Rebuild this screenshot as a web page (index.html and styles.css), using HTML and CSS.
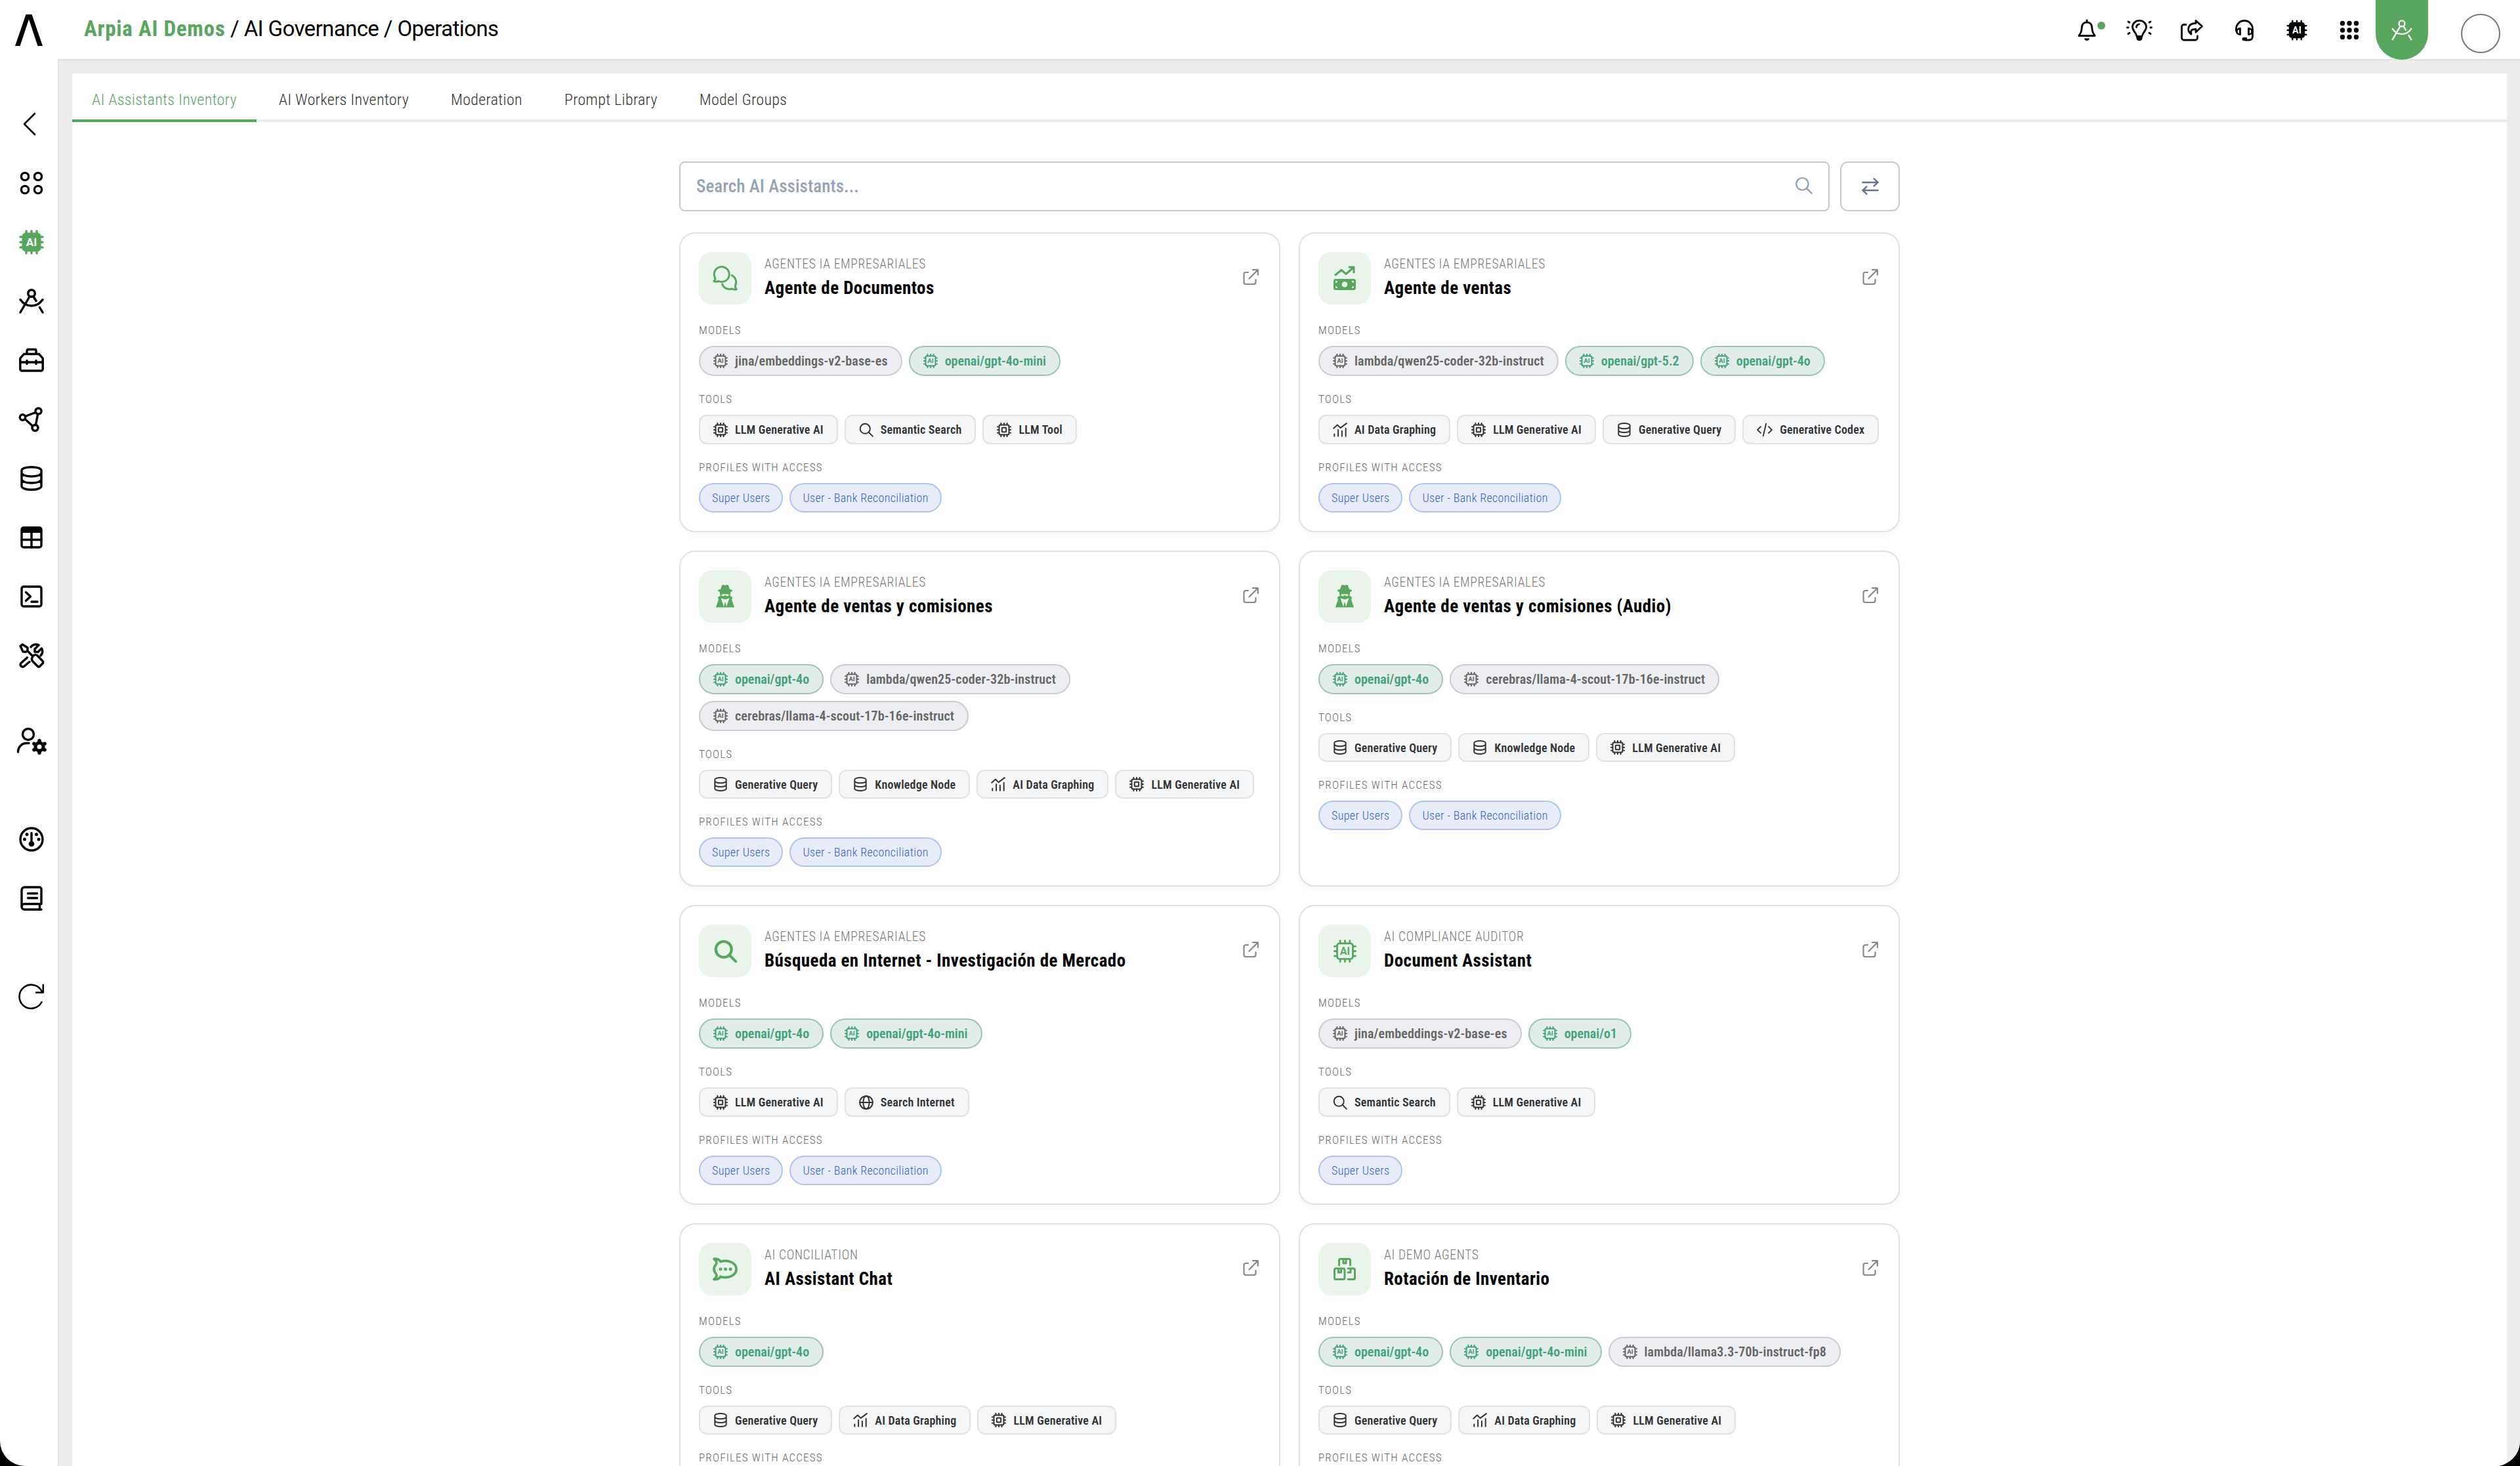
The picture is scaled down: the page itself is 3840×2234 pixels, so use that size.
FILE: index.html
```
<!DOCTYPE html>
<html lang="en">

<head>
  <meta charset="UTF-8">
  <meta name="viewport" content="width=device-width, initial-scale=1.0">
  <title>AI Governance / Operations</title>
  <link rel="stylesheet" href="styles.css">
</head>

<body>
  <!-- icons -->
  <svg class="sprite" aria-hidden="true">
    <symbol id="i-ai" viewBox="0 0 38 38">
      <rect x="6" y="6" width="26" height="26" rx="4" class="ln" />
      <path class="ln" d="M11 6V1.500M19 6V1.500M27 6V1.500M11 36.500V32M19 36.500V32M27 36.500V32M6 11H1.500M6 19H1.500M6 27H1.500M36.500 11H32M36.500 19H32M36.500 27H32" />
      <text x="19" y="25" class="ai">AI</text>
    </symbol>
    <symbol id="i-ai-solid" viewBox="0 0 38 38">
      <rect x="4.500" y="4.500" width="29" height="29" rx="6" fill="currentColor" />
      <path class="ln" d="M11 6V2M19 6V2M27 6V2M11 36V32M19 36V32M27 36V32M6 11H2M6 19H2M6 27H2M36 11H32M36 19H32M36 27H32" />
      <text x="19" y="25" class="ai ai-white">AI</text>
    </symbol>
    <symbol id="i-cpu" viewBox="0 0 38 38">
      <rect x="6" y="6" width="26" height="26" rx="4" class="ln" />
      <rect x="13.500" y="13.500" width="11" height="11" rx="1" class="ln" />
      <path class="ln" d="M11 6V1.500M19 6V1.500M27 6V1.500M11 36.500V32M19 36.500V32M27 36.500V32M6 11H1.500M6 19H1.500M6 27H1.500M36.500 11H32M36.500 19H32M36.500 27H32" />
    </symbol>
    <symbol id="i-compass" viewBox="0 0 38 38">
      <circle cx="19" cy="7" r="5.300" class="ln" />
      <path class="ln" d="M16 12L2 36M22 12l4 6.500M31.500 28.500L36 36M2 16.500c4 6 10 9.500 17 9.500s13-3.500 17-9.500" />
    </symbol>
    <symbol id="i-db" viewBox="0 0 38 38">
      <path class="ln" d="M4 7c0-3 7-5.300 15-5.300S34 4 34 7v24c0 3-7 5.300-15 5.300S4 34 4 31zM4 10c0 4 7 6 15 6s15-2 15-6M4 20c0 4 7 6 15 6s15-2 15-6" />
    </symbol>
    <symbol id="i-search" viewBox="0 0 38 38">
      <circle cx="16" cy="16" r="13" class="ln" />
      <path class="ln" d="M25.500 25.500L36 36" />
    </symbol>
    <symbol id="i-graph" viewBox="0 0 38 38">
      <path class="ln" d="M2 15L12 6l8 8L36 2M4 36v-6M14 36V19M24 36V22M34 36V15" />
    </symbol>
    <symbol id="i-code" viewBox="0 0 44 38">
      <path class="ln" d="M11 10L2 19l9 9M33 10l9 9-9 9M26 2L18 36" />
    </symbol>
    <symbol id="i-globe" viewBox="0 0 38 38">
      <circle cx="19" cy="19" r="17" class="ln" />
      <ellipse cx="19" cy="19" rx="8" ry="17" class="ln" />
      <path class="ln" d="M2 19h34" />
    </symbol>
    <symbol id="i-ext" viewBox="0 0 24 24">
      <path class="ln" d="M8 5H4.500A3 3 0 0 0 1.500 8v12a3 3 0 0 0 3 3h12a3 3 0 0 0 3-3v-4M15 1.200h7.800V9M22.500 1.500L9.500 14.500" />
    </symbol>
  </svg>

  <div class="app">
    <!-- left menu -->
    <aside class="sidebar">
      <a class="logo" href="#">
        <svg viewBox="0 0 42 48"><path d="M16.500 0h9L42 48h-7.500L21 7.500 7.500 48H0z" fill="#000" /></svg>
      </a>
      <nav class="menu">
        <a href="#"><svg viewBox="0 0 38 38"><path class="ln thin" d="M24 3L8 19l16 16" /></svg></a>
        <a href="#"><svg viewBox="0 0 38 38"><g class="ln"><circle cx="9" cy="9" r="5.600" /><circle cx="29" cy="9" r="5.600" /><circle cx="9" cy="29" r="5.600" /><circle cx="29" cy="29" r="5.600" /></g></svg></a>
        <a class="on" href="#"><svg><use href="#i-ai-solid" /></svg></a>
        <a href="#"><svg><use href="#i-compass" /></svg></a>
        <a href="#"><svg viewBox="0 0 38 38"><path class="ln" d="M7.500 9.500h23L36.200 16v16.500a2.500 2.500 0 0 1-2.500 2.500H4.300a2.500 2.500 0 0 1-2.500-2.500V16zM12 9V4.500a2 2 0 0 1 2-2h10a2 2 0 0 1 2 2V9M2 22h34M12 19.500v5M26 19.500v5" /></svg></a>
        <a href="#"><svg viewBox="0 0 38 38"><g class="ln"><circle cx="5.500" cy="16" r="4.200" /><circle cx="29.500" cy="6.500" r="4.500" /><circle cx="24.500" cy="32" r="4.500" /><path d="M9.500 14.500l15.500-6M9 18.500L20.500 29M28.500 11.500l-3 16" /></g></svg></a>
        <a href="#"><svg><use href="#i-db" /></svg></a>
        <a href="#"><svg viewBox="0 0 38 38"><rect x="4" y="4" width="30" height="30" rx="3" class="ln" /><path d="M4 4h30v8H4z" fill="currentColor" /><path class="ln" d="M19 11v23M4 22.500h30" /></svg></a>
        <a href="#"><svg viewBox="0 0 38 38"><rect x="4" y="4" width="30" height="30" rx="3" class="ln" /><path class="ln" d="M10.500 12.500l7 6.500-7 6.500M19 27h9" /></svg></a>
        <a href="#"><svg viewBox="0 0 38 38"><path class="ln" d="M2 4.500L5 2l8 5v4.500l-2.500 2L6 13zM13 12l8 8M21.500 19.500c2-2 5-2 7 0L36.500 28v2.500L31 36h-2l-8-8c-2-2-2-5 .5-8.500zM12.500 22l-10 9c-1.500 3 1.500 6 4.500 5l9-7.500M18 6c3-4 8-5 12-3l-6 6v4.500h5l5.500-5.500c2 4 1.500 8-1.500 11" /></svg></a>
        <a class="gap-40" href="#"><svg class="wide" viewBox="0 0 46 42"><circle cx="18" cy="11" r="8.500" class="ln" /><path class="ln" d="M2.500 38c0-8 6-13.500 13-13.500h3.500" /><circle cx="35" cy="30" r="6" fill="none" stroke="currentColor" stroke-width="5" /><path d="M35 20.800v1M35 38.200v1M27 25.400l1 .6M42 34l1 .6M27 34.600l1-.6M42 26l1-.6" stroke="currentColor" stroke-width="5.500" stroke-linecap="round" /></svg></a>
        <a class="gap-60" href="#"><svg viewBox="0 0 38 38"><circle cx="19" cy="19" r="17" class="ln" /><path class="ln" d="M19 9.500V24" /><g fill="currentColor"><circle cx="19" cy="26" r="4.300" /><circle cx="12" cy="11.500" r="2.500" /><circle cx="26.500" cy="11.500" r="2.500" /><circle cx="8.500" cy="19" r="2.500" /><circle cx="30" cy="19" r="2.500" /></g></svg></a>
        <a href="#"><svg viewBox="0 0 38 38"><path class="ln" d="M34 36H8.500A4.500 4.500 0 0 1 4 31.500V6.500A4.500 4.500 0 0 1 8.500 2H31a3 3 0 0 1 3 3v22.500H8a4 4 0 0 0-4 4M31.500 28v8M13.500 11.500h14M13.500 18.500h14" /></svg></a>
        <a class="gap-60" href="#"><svg viewBox="0 0 38 38"><path class="ln thin" d="M34.500 27A18 18 0 1 1 35 11.500M36.800.8v11.700H26" /></svg></a>
      </nav>
    </aside>

    <div class="page">
      <header class="header">
        <div class="crumbs"><b>Arpia AI Demos</b> <span>/ AI Governance / Operations</span></div>
        <div class="actions">
          <a class="bell" href="#"><svg viewBox="0 0 32 32"><path class="ln" d="M16 1v3M16 3.800c-5 0-7.800 3.700-7.800 8.200 0 7-2 9-4.400 12.500h24.400C25.800 21 23.800 19 23.800 12c0-4.500-2.800-8.200-7.800-8.200z" /><path d="M12 28.500h8c-.8 4.500-7.200 4.500-8 0z" fill="currentColor" /></svg></a>
          <a href="#"><svg class="bulb" viewBox="0 0 40 32"><path class="ln" d="M15.500 24c0-4-6-6.500-6-13a10.500 9.700 0 0 1 21 0c0 6.500-6 9-6 13M15.500 11.500c0-2.500 1.500-4 4-4.500M1.500 12h1.500M37 12h1.500M3 3l2 1.200M37 3l-2 1.200M3 21.500l2-1.200M37 21.500l-2-1.200" /><path d="M14.500 24h11l-1.500 6c-1.500 3-6.500 3-8 0z" fill="currentColor" /></svg></a>
          <a href="#"><svg class="share" viewBox="0 0 34 32"><path class="ln" d="M8 7.500H5A3.500 3.500 0 0 0 1.500 11v16.500A3.500 3.500 0 0 0 5 31h17a3.500 3.500 0 0 0 3.500-3.500V25M23 1.500l9.500 8.500L23 19v-4.500c-6 0-8.500 1.500-7 7.500-7-5-6-16.500 7-16.500z" /></svg></a>
          <a href="#"><svg viewBox="0 0 32 32"><path class="ln" d="M3.500 17v-3a12.500 12.500 0 0 1 25 0v12a5 5 0 0 1-5 5H17M9.500 13.500c-7 0-7 9 0 9zM22.500 13.500c7 0 7 9 0 9z" /><path d="M15 27h5v5h-5a2.500 2.500 0 0 1 0-5z" fill="currentColor" /></svg></a>
          <a href="#"><svg><use href="#i-ai-solid" /></svg></a>
          <a href="#"><svg viewBox="0 0 32 32"><g fill="currentColor"><circle cx="5.500" cy="5.500" r="3.700" /><circle cx="16" cy="5.500" r="3.700" /><circle cx="26.500" cy="5.500" r="3.700" /><circle cx="5.500" cy="16" r="3.700" /><circle cx="16" cy="16" r="3.700" /><circle cx="26.500" cy="16" r="3.700" /><circle cx="5.500" cy="26.500" r="3.700" /><circle cx="16" cy="26.500" r="3.700" /><circle cx="26.500" cy="26.500" r="3.700" /></g></svg></a>
          <a class="current" href="#"><svg><use href="#i-compass" /></svg></a>
        </div>
        <div class="avatar"></div>
      </header>

      <main class="main">
        <div class="panel">
          <div class="tabs">
            <a class="active" href="#">AI Assistants Inventory</a>
            <a href="#">AI Workers Inventory</a>
            <a href="#">Moderation</a>
            <a href="#">Prompt Library</a>
            <a href="#">Model Groups</a>
          </div>

          <div class="content">
            <div class="search">
              <div class="search-box">
                <span>Search AI Assistants...</span>
                <svg><use href="#i-search" /></svg>
              </div>
              <button class="swap"><svg viewBox="0 0 28 28"><path class="ln" d="M1.500 7.500h25M20 1.500l6.500 6-6.500 6M26.500 20.500h-25M8 14.500l-6.500 6 6.500 6" /></svg></button>
            </div>

            <div class="cards">
              <!-- Agente de Documentos -->
              <div class="card">
                <div class="head">
                  <div class="tile"><svg viewBox="0 0 38 38"><path class="ln" d="M1.800 23.500c1.800-1.500 2.500-3 1.800-5A11.500 11.500 0 1 1 9 23.500c-2.500 1-5 1-7.200 0zM29 14.500a11.500 11.500 0 0 1 5.500 15.500c-.5 2 0 4 1.800 6-2.500.5-5 .3-7.300-1A11.500 11.500 0 0 1 14.500 28" /></svg></div>
                  <div class="name"><small>AGENTES IA EMPRESARIALES</small><h3>Agente de Documentos</h3></div>
                  <svg class="ext"><use href="#i-ext" /></svg>
                </div>
                <h4>MODELS</h4>
                <div class="row">
                  <span class="model"><svg><use href="#i-ai" /></svg>jina/embeddings-v2-base-es</span>
                  <span class="model openai"><svg><use href="#i-ai" /></svg>openai/gpt-4o-mini</span>
                </div>
                <h4>TOOLS</h4>
                <div class="row">
                  <span class="tool"><svg><use href="#i-cpu" /></svg>LLM Generative AI</span>
                  <span class="tool tall"><svg><use href="#i-search" /></svg>Semantic Search</span>
                  <span class="tool"><svg><use href="#i-cpu" /></svg>LLM Tool</span>
                </div>
                <h4>PROFILES WITH ACCESS</h4>
                <div class="row">
                  <span class="profile">Super Users</span>
                  <span class="profile">User - Bank Reconciliation</span>
                </div>
              </div>

              <!-- Agente de ventas -->
              <div class="card">
                <div class="head">
                  <div class="tile"><svg viewBox="0 0 38 38"><path class="ln" d="M5 14l9-7.500 7 6L32 3M26 2h7v8" /><rect x="2" y="20" width="34" height="17" rx="3" fill="currentColor" /><circle cx="19" cy="28.500" r="4.300" fill="#e9f4ea" /><path d="M6 26v-2h2M32 26v-2h-2M6 31v2h2M32 31v2h-2" fill="none" stroke="#e9f4ea" stroke-width="1.800" /></svg></div>
                  <div class="name"><small>AGENTES IA EMPRESARIALES</small><h3>Agente de ventas</h3></div>
                  <svg class="ext"><use href="#i-ext" /></svg>
                </div>
                <h4>MODELS</h4>
                <div class="row">
                  <span class="model"><svg><use href="#i-ai" /></svg>lambda/qwen25-coder-32b-instruct</span>
                  <span class="model openai"><svg><use href="#i-ai" /></svg>openai/gpt-5.2</span>
                  <span class="model openai"><svg><use href="#i-ai" /></svg>openai/gpt-4o</span>
                </div>
                <h4>TOOLS</h4>
                <div class="row">
                  <span class="tool"><svg><use href="#i-graph" /></svg>AI Data Graphing</span>
                  <span class="tool"><svg><use href="#i-cpu" /></svg>LLM Generative AI</span>
                  <span class="tool"><svg><use href="#i-db" /></svg>Generative Query</span>
                  <span class="tool tall"><svg class="code"><use href="#i-code" /></svg>Generative Codex</span>
                </div>
                <h4>PROFILES WITH ACCESS</h4>
                <div class="row">
                  <span class="profile">Super Users</span>
                  <span class="profile">User - Bank Reconciliation</span>
                </div>
              </div>

              <!-- Agente de ventas y comisiones -->
              <div class="card">
                <div class="head">
                  <div class="tile"><svg viewBox="0 0 38 38"><path d="M14 2c2-1.500 3.500 0 5 0s3-1.500 5 0l2 6c3 .5 4 1 4 2s-1.500 1.700-3 2v3c0 1-.5 2-1 3 3 .5 4 1.500 4 3.500l-1 2 4 12H5l4-12-1-2c0-2 1-3 4-3.500-.5-1-1-2-1-3v-3c-1.500-.3-3-1-3-2s1-1.500 4-2z" fill="currentColor" /><path d="M13.500 15.500h11c0 4-3 3.500-5.500 1.500-2.500 2-5.500 2.500-5.500-1.500zM12.500 21.500l6.500 2 6.500-2-4.500 13-2-8-2 8z" fill="#e9f4ea" /></svg></div>
                  <div class="name"><small>AGENTES IA EMPRESARIALES</small><h3>Agente de ventas y comisiones</h3></div>
                  <svg class="ext"><use href="#i-ext" /></svg>
                </div>
                <h4>MODELS</h4>
                <div class="row">
                  <span class="model openai"><svg><use href="#i-ai" /></svg>openai/gpt-4o</span>
                  <span class="model"><svg><use href="#i-ai" /></svg>lambda/qwen25-coder-32b-instruct</span>
                  <span class="model"><svg><use href="#i-ai" /></svg>cerebras/llama-4-scout-17b-16e-instruct</span>
                </div>
                <h4>TOOLS</h4>
                <div class="row">
                  <span class="tool"><svg><use href="#i-db" /></svg>Generative Query</span>
                  <span class="tool"><svg><use href="#i-db" /></svg>Knowledge Node</span>
                  <span class="tool"><svg><use href="#i-graph" /></svg>AI Data Graphing</span>
                  <span class="tool"><svg><use href="#i-cpu" /></svg>LLM Generative AI</span>
                </div>
                <h4>PROFILES WITH ACCESS</h4>
                <div class="row">
                  <span class="profile">Super Users</span>
                  <span class="profile">User - Bank Reconciliation</span>
                </div>
              </div>

              <!-- Agente de ventas y comisiones (Audio) -->
              <div class="card">
                <div class="head">
                  <div class="tile"><svg viewBox="0 0 38 38"><path d="M14 2c2-1.500 3.500 0 5 0s3-1.500 5 0l2 6c3 .5 4 1 4 2s-1.500 1.700-3 2v3c0 1-.5 2-1 3 3 .5 4 1.500 4 3.500l-1 2 4 12H5l4-12-1-2c0-2 1-3 4-3.500-.5-1-1-2-1-3v-3c-1.500-.3-3-1-3-2s1-1.500 4-2z" fill="currentColor" /><path d="M13.500 15.500h11c0 4-3 3.500-5.500 1.500-2.500 2-5.500 2.500-5.500-1.500zM12.500 21.500l6.500 2 6.500-2-4.500 13-2-8-2 8z" fill="#e9f4ea" /></svg></div>
                  <div class="name"><small>AGENTES IA EMPRESARIALES</small><h3>Agente de ventas y comisiones (Audio)</h3></div>
                  <svg class="ext"><use href="#i-ext" /></svg>
                </div>
                <h4>MODELS</h4>
                <div class="row">
                  <span class="model openai"><svg><use href="#i-ai" /></svg>openai/gpt-4o</span>
                  <span class="model"><svg><use href="#i-ai" /></svg>cerebras/llama-4-scout-17b-16e-instruct</span>
                </div>
                <h4>TOOLS</h4>
                <div class="row">
                  <span class="tool"><svg><use href="#i-db" /></svg>Generative Query</span>
                  <span class="tool"><svg><use href="#i-db" /></svg>Knowledge Node</span>
                  <span class="tool"><svg><use href="#i-cpu" /></svg>LLM Generative AI</span>
                </div>
                <h4>PROFILES WITH ACCESS</h4>
                <div class="row">
                  <span class="profile">Super Users</span>
                  <span class="profile">User - Bank Reconciliation</span>
                </div>
              </div>

              <!-- Búsqueda en Internet -->
              <div class="card">
                <div class="head">
                  <div class="tile bold"><svg><use href="#i-search" /></svg></div>
                  <div class="name"><small>AGENTES IA EMPRESARIALES</small><h3>Búsqueda en Internet - Investigación de Mercado</h3></div>
                  <svg class="ext"><use href="#i-ext" /></svg>
                </div>
                <h4>MODELS</h4>
                <div class="row">
                  <span class="model openai"><svg><use href="#i-ai" /></svg>openai/gpt-4o</span>
                  <span class="model openai"><svg><use href="#i-ai" /></svg>openai/gpt-4o-mini</span>
                </div>
                <h4>TOOLS</h4>
                <div class="row">
                  <span class="tool"><svg><use href="#i-cpu" /></svg>LLM Generative AI</span>
                  <span class="tool tall"><svg><use href="#i-globe" /></svg>Search Internet</span>
                </div>
                <h4>PROFILES WITH ACCESS</h4>
                <div class="row">
                  <span class="profile">Super Users</span>
                  <span class="profile">User - Bank Reconciliation</span>
                </div>
              </div>

              <!-- Document Assistant -->
              <div class="card">
                <div class="head">
                  <div class="tile small"><svg><use href="#i-ai" /></svg></div>
                  <div class="name"><small>AI COMPLIANCE AUDITOR</small><h3>Document Assistant</h3></div>
                  <svg class="ext"><use href="#i-ext" /></svg>
                </div>
                <h4>MODELS</h4>
                <div class="row">
                  <span class="model"><svg><use href="#i-ai" /></svg>jina/embeddings-v2-base-es</span>
                  <span class="model openai"><svg><use href="#i-ai" /></svg>openai/o1</span>
                </div>
                <h4>TOOLS</h4>
                <div class="row">
                  <span class="tool tall"><svg><use href="#i-search" /></svg>Semantic Search</span>
                  <span class="tool"><svg><use href="#i-cpu" /></svg>LLM Generative AI</span>
                </div>
                <h4>PROFILES WITH ACCESS</h4>
                <div class="row">
                  <span class="profile">Super Users</span>
                </div>
              </div>

              <!-- AI Assistant Chat -->
              <div class="card">
                <div class="head">
                  <div class="tile"><svg class="rocket" viewBox="0 0 38 38"><path class="ln" d="M2 3.500c4-.5 8 1 10 4 12-3.500 24 2 24 11.500S24 34 12 30.500c-2 3-6 4.500-10 4 4-3 5-6 3-8.500-4-4-4-10 0-14 2-2.500 1-5.500-3-8.500z" /><g fill="currentColor"><circle cx="12" cy="19" r="2.500" /><circle cx="19.500" cy="19" r="2.500" /><circle cx="27" cy="19" r="2.500" /></g></svg></div>
                  <div class="name"><small>AI CONCILIATION</small><h3>AI Assistant Chat</h3></div>
                  <svg class="ext"><use href="#i-ext" /></svg>
                </div>
                <h4>MODELS</h4>
                <div class="row">
                  <span class="model openai"><svg><use href="#i-ai" /></svg>openai/gpt-4o</span>
                </div>
                <h4>TOOLS</h4>
                <div class="row">
                  <span class="tool"><svg><use href="#i-db" /></svg>Generative Query</span>
                  <span class="tool"><svg><use href="#i-graph" /></svg>AI Data Graphing</span>
                  <span class="tool"><svg><use href="#i-cpu" /></svg>LLM Generative AI</span>
                </div>
                <h4>PROFILES WITH ACCESS</h4>
              </div>

              <!-- Rotación de Inventario -->
              <div class="card">
                <div class="head">
                  <div class="tile"><svg viewBox="0 0 38 38"><path class="ln" d="M10.500 13V5.500a2 2 0 0 1 2-2h13a2 2 0 0 1 2 2V13M17 4v6h4V4M5.500 18h11.500a2 2 0 0 1 2 2v12.500a2 2 0 0 1-2 2H5.500a2 2 0 0 1-2-2V20a2 2 0 0 1 2-2zM9.500 18v6h4v-6M24 18h8.500a2 2 0 0 1 2 2v12.500a2 2 0 0 1-2 2H24M28 18v6h-4" /></svg></div>
                  <div class="name"><small>AI DEMO AGENTS</small><h3>Rotación de Inventario</h3></div>
                  <svg class="ext"><use href="#i-ext" /></svg>
                </div>
                <h4>MODELS</h4>
                <div class="row">
                  <span class="model openai"><svg><use href="#i-ai" /></svg>openai/gpt-4o</span>
                  <span class="model openai"><svg><use href="#i-ai" /></svg>openai/gpt-4o-mini</span>
                  <span class="model"><svg><use href="#i-ai" /></svg>lambda/llama3.3-70b-instruct-fp8</span>
                </div>
                <h4>TOOLS</h4>
                <div class="row">
                  <span class="tool"><svg><use href="#i-db" /></svg>Generative Query</span>
                  <span class="tool"><svg><use href="#i-graph" /></svg>AI Data Graphing</span>
                  <span class="tool"><svg><use href="#i-cpu" /></svg>LLM Generative AI</span>
                </div>
                <h4>PROFILES WITH ACCESS</h4>
              </div>
            </div>
          </div>
        </div>
      </main>
    </div>
  </div>
</body>

</html>
```
FILE: styles.css
```
* {
  margin: 0;
  padding: 0;
  box-sizing: border-box;
}

body {
  background: #000;
  color: #000;
  font-family: Roboto, "Liberation Sans", sans-serif;
  font-stretch: 75%;
  overflow: hidden;
}

a {
  color: inherit;
  text-decoration: none;
}

svg {
  display: block;
  flex: none;
}

.sprite {
  display: none;
}

/* icon strokes */
.ln {
  fill: none;
  stroke: currentColor;
  stroke-width: var(--sw, 3.4);
  stroke-linecap: round;
  stroke-linejoin: round;
}

.thin {
  --sw: 2.6;
}

.ai {
  font: 700 17px Roboto, sans-serif;
  letter-spacing: 0;
  fill: currentColor;
  text-anchor: middle;
}

.ai-white {
  fill: #fff;
}

.app {
  display: flex;
  height: 100vh;
  background: #fff;
  border-radius: 0 0 38px 38px;
  overflow: hidden;
}

/* sidebar */
.sidebar {
  width: 88px;
  flex: none;
}

.logo {
  display: block;
  height: 144px;
  padding: 22px 0 0 23px;
}

.logo svg {
  width: 42px;
  height: 48px;
}

.menu a {
  display: flex;
  align-items: center;
  justify-content: center;
  height: 90px;
  padding-left: 8px;
}

.menu svg {
  width: 38px;
  height: 38px;
  overflow: visible;
}

.menu .wide {
  width: 46px;
  height: 42px;
}

.menu .on {
  color: #59a65f;
}

.menu .gap-40 {
  margin-top: 40px;
}

.menu .gap-60 {
  margin-top: 60px;
}

/* header */
.page {
  flex: 1;
  display: flex;
  flex-direction: column;
  min-width: 0;
}

.header {
  display: flex;
  height: 90px;
  flex: none;
  padding: 0 30px 0 40px;
}

.crumbs {
  flex: 1;
  line-height: 87px;
  font-size: 33px;
}

.crumbs b {
  color: #59a65f;
  letter-spacing: .75px;
}

.crumbs span {
  font-stretch: 100%;
  letter-spacing: -.6px;
}

.actions {
  display: flex;
  margin-right: 50px;
}

.actions a {
  position: relative;
  display: flex;
  justify-content: center;
  width: 80px;
  height: 91px;
  padding-top: 30px;
}

.actions svg {
  width: 32px;
  height: 32px;
  overflow: visible;
  --sw: 2.8;
}

.actions .bulb {
  width: 40px;
}

.actions .share {
  width: 34px;
}

.bell::after {
  content: "";
  position: absolute;
  top: 33px;
  right: 12px;
  width: 12px;
  height: 12px;
  border-radius: 50%;
  background: #59a65f;
}

.actions .current {
  background: #59a65f;
  color: #fff;
  border-radius: 0 0 40px 40px;
  z-index: 1;
}

.avatar {
  width: 60px;
  height: 60px;
  margin-top: 21px;
  border: 2px solid #777;
  border-radius: 50%;
}

/* main */
.main {
  flex: 1;
  min-height: 0;
  display: flex;
  padding: 20px 20px 0;
  background: #ededed;
  border-top: 2px solid #e2e2e2;
  border-left: 2px solid #e2e2e2;
}

.panel {
  flex: 1;
  background: #fff;
  overflow: hidden;
}

.tabs {
  display: flex;
  gap: 4px;
  height: 74px;
  box-shadow: inset 0 -4px 0 #ebebeb;
}

.tabs a {
  padding: 10px 30px 0;
  line-height: 60px;
  font-size: 24px;
  font-weight: 300;
  letter-spacing: .3px;
  color: #333;
}

.tabs .active {
  color: #59a65f;
  border-bottom: 4px solid #59a65f;
}

.content {
  width: 1860px;
  margin: 60px auto 0;
}

.search {
  display: flex;
  gap: 16px;
  margin-bottom: 32px;
}

.search-box {
  flex: 1;
  display: flex;
  align-items: center;
  justify-content: space-between;
  height: 76px;
  padding: 0 24px;
  border: 2px solid #c9c9c9;
  border-radius: 8px;
  font-size: 27px;
  font-weight: 500;
  letter-spacing: .1px;
  color: #94a3b8;
}

.search-box svg {
  width: 27px;
  height: 27px;
  margin-bottom: 3px;
}

.swap {
  display: flex;
  align-items: center;
  justify-content: center;
  width: 91px;
  border: 2px solid #c9c9c9;
  border-radius: 12px;
  background: #fff;
  color: #64748b;
}

.swap svg {
  width: 26px;
  height: 26px;
  --sw: 2.6;
}

.cards {
  display: grid;
  grid-template-columns: 1fr 1fr;
  gap: 28px;
}

.card {
  min-height: 456px;
  padding: 28px;
  border: 2px solid #e1e1e1;
  border-radius: 24px;
  box-shadow: 0 4px 8px rgba(0, 0, 0, .04);
}

.head {
  display: flex;
  align-items: center;
  height: 80px;
}

.tile {
  display: flex;
  align-items: center;
  justify-content: center;
  width: 80px;
  height: 80px;
  border-radius: 20px;
  background: #e9f4ea;
  color: #59a65f;
}

.tile svg {
  width: 38px;
  height: 38px;
  overflow: visible;
  --sw: 3;
}

.tile .rocket {
  --sw: 3.8;
}

.tile.small svg,
.tile.bold svg {
  width: 35px;
  height: 35px;
}

.tile.bold svg {
  --sw: 4.5;
}

.name {
  flex: 1;
  margin: -2px 0 0 20px;
}

.name small {
  display: block;
  margin-bottom: 4px;
  line-height: 28px;
  font-size: 19.5px;
  font-weight: 300;
  letter-spacing: .7px;
  color: #777;
}

.name h3 {
  line-height: 36px;
  font-size: 27px;
  font-weight: 700;
  letter-spacing: .43px;
}

.ext {
  width: 24px;
  height: 24px;
  margin: -4px 3px 0 0;
  color: #888;
  --sw: 2.2;
}

.card h4 {
  margin: 24px 0 13px;
  line-height: 22px;
  font-size: 17px;
  font-weight: 300;
  letter-spacing: 1.2px;
  color: #666;
}

.card .head + h4 {
  margin-top: 28px;
}

.row {
  display: flex;
  flex-wrap: wrap;
  gap: 10px;
}

.row span {
  display: flex;
  align-items: center;
  gap: 11px;
  padding: 0 20px;
  border: 2px solid;
  white-space: nowrap;
}

.row svg {
  width: 22px;
  height: 22px;
}

.row .model {
  height: 46px;
  border-color: #cbccd2;
  border-radius: 23px;
  background: #edeef1;
  font-size: 20px;
  font-weight: 600;
  letter-spacing: .14px;
  color: #666;
}

.row .openai {
  border-color: #9cc5b4;
  background: #e2ece8;
  letter-spacing: 0;
  color: #41a27c;
}

.row .tool {
  min-height: 44px;
  border-color: #e2e2e2;
  border-radius: 12px;
  background: #f5f6f8;
  font-size: 18px;
  font-weight: 600;
  letter-spacing: .19px;
  color: #333;
}

.row .tall {
  min-height: 45px;
}

.tool .code {
  width: 24px;
}

.row .profile {
  height: 45px;
  padding: 0 18px;
  border-color: #b1c4ed;
  border-radius: 23px;
  background: #e6ecf8;
  font-size: 18px;
  font-weight: 300;
  letter-spacing: .36px;
  color: #2f5fd0;
}
```
